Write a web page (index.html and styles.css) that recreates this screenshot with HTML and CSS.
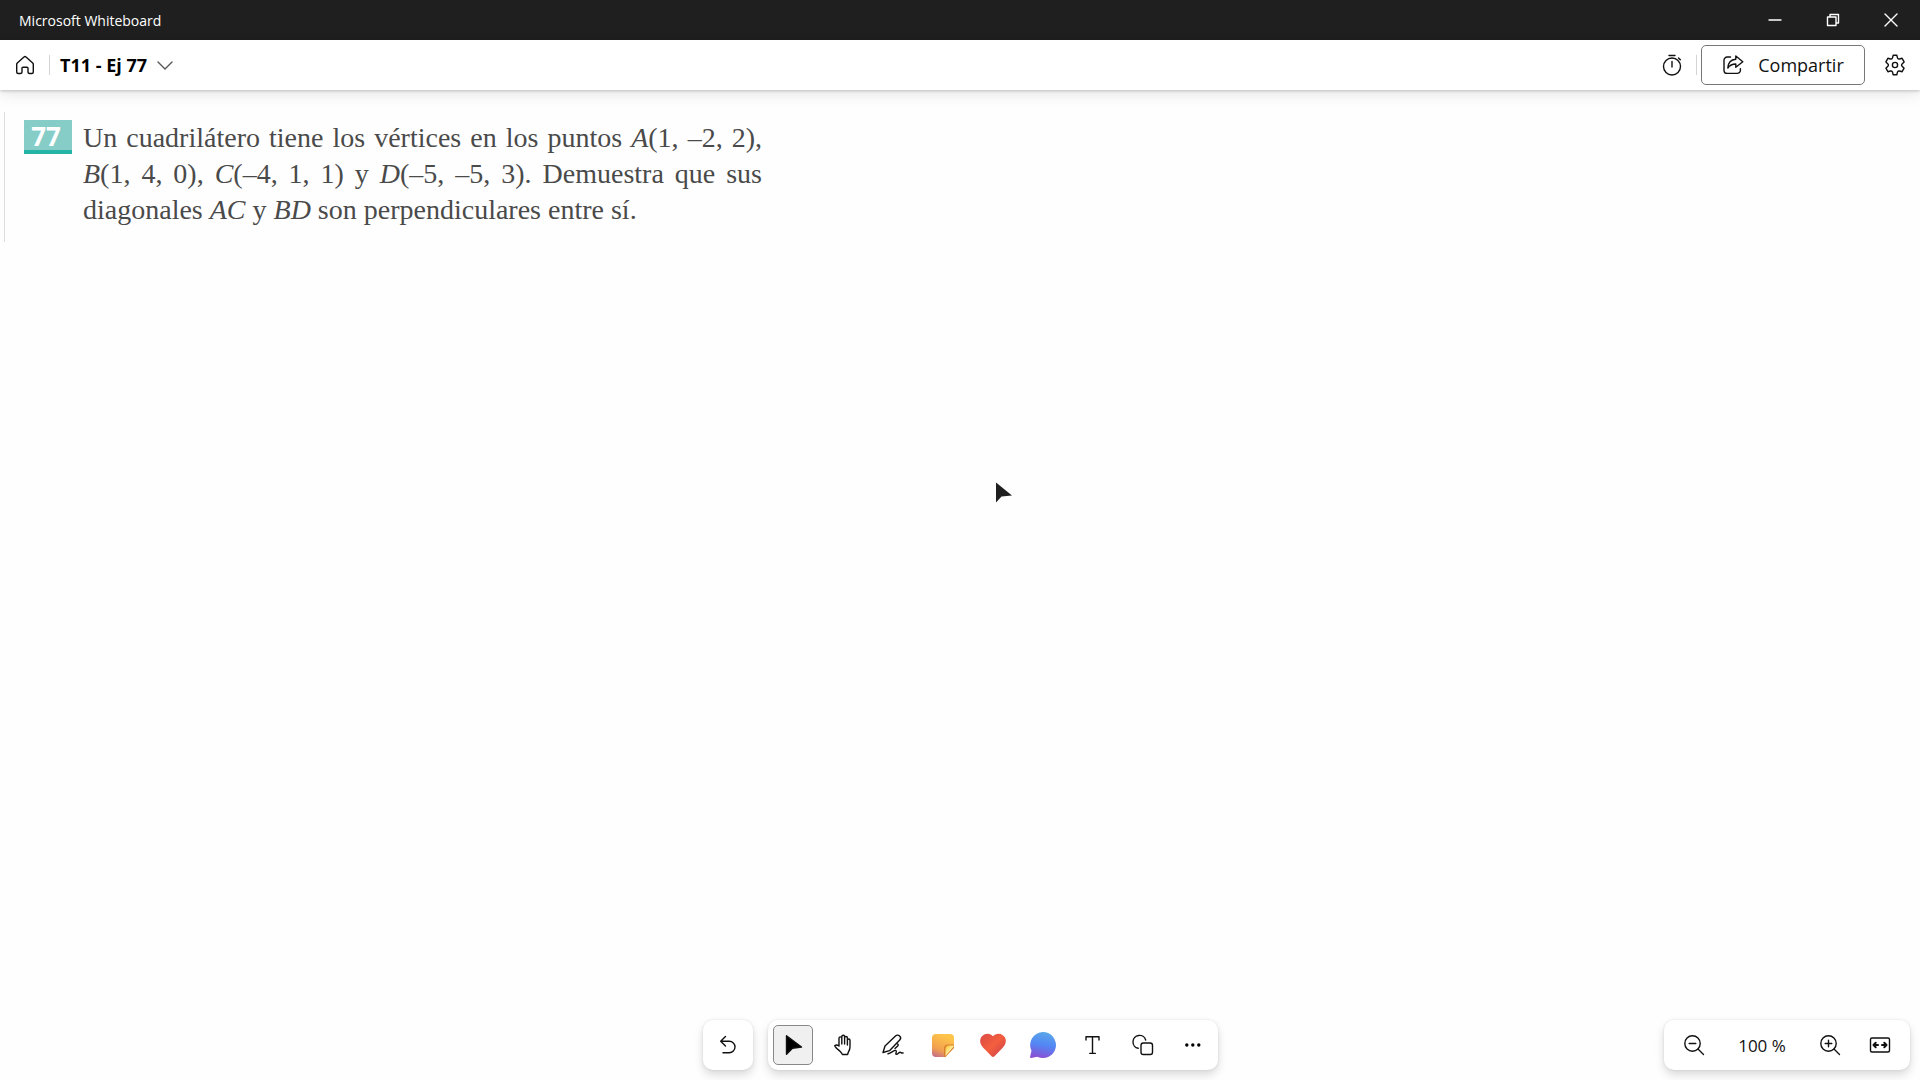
FILE: index.html
```html
<!DOCTYPE html>
<html lang="es">
<head>
    <meta charset="UTF-8">
    <meta name="viewport" content="width=device-width, initial-scale=1.0">
    <title>Microsoft Whiteboard</title>
    <link rel="stylesheet" href="styles.css">
</head>
<body>
    <div class="titlebar">
        <span class="titlebar-name">Microsoft Whiteboard</span>
        <div class="window-buttons">
            <button type="button" aria-label="Minimizar">
                <svg width="14" height="14" viewBox="0 0 14 14"><path d="M1 7h12"/></svg>
            </button>
            <button type="button" aria-label="Restaurar">
                <svg width="14" height="14" viewBox="0 0 14 14"><path d="M1.500 4h8.500v8.500h-8.500zM4 4V1.500h8.500V10H10"/></svg>
            </button>
            <button type="button" aria-label="Cerrar">
                <svg width="14" height="14" viewBox="0 0 14 14"><path d="M1 1l12 12M13 1L1 13"/></svg>
            </button>
        </div>
    </div>

    <header class="header">
        <button type="button" class="icon-button" aria-label="Inicio">
            <svg width="20" height="20" viewBox="0 0 20 20"><path d="M9 1.900a1.500 1.500 0 0 1 2 0l6.700 6c.4.400.6.800.6 1.300V17c0 .900-.6 1.500-1.500 1.500h-2.300c-.9 0-1.500-.6-1.500-1.500v-3.800c0-.6-.4-1-1-1H8c-.6 0-1 .4-1 1V17c0 .900-.6 1.500-1.500 1.500H3.200c-.9 0-1.500-.6-1.500-1.500V9.200c0-.5.200-.9.600-1.300z"/></svg>
        </button>
        <span class="divider"></span>
        <button type="button" class="board-name">
            T11 - Ej 77
            <svg width="16" height="16" viewBox="0 0 16 16"><path d="M1 5l7 7 7-7"/></svg>
        </button>
        <div class="header-actions">
            <button type="button" class="icon-button" aria-label="Temporizador">
                <svg width="20" height="22" viewBox="0 0 20 22"><circle cx="10" cy="12.500" r="8.500"/><path d="M10 7.500v5.500M7 1.500h6M16.500 4l1.800 1.800"/></svg>
            </button>
            <span class="divider"></span>
            <button type="button" class="share">
                <svg width="22" height="22" viewBox="0 0 22 22"><path d="M8.500 3H5.200A3.200 3.200 0 0 0 2 6.200v10A3.200 3.200 0 0 0 5.200 19.400h10a3.200 3.200 0 0 0 3.200-3.200v-1.400"/><path d="M13.800 2l7 5.700-7 5.500V10c-3.500 0-6 1.100-8 4 .3-5 3.200-8.300 8-8.700z"/></svg>
                Compartir
            </button>
            <button type="button" class="icon-button settings" aria-label="Configuración">
                <svg width="22" height="22" viewBox="0 0 22 22"><path d="M9.200 1.200h3.600l.7 2.700c.2.800 1 1.300 1.900 1.100l2.700-.7 2 3.600-2 2c-.7.700-.7 1.600 0 2.300l2 2-2 3.500-2.700-.7c-.9-.2-1.700.3-1.900 1.100l-.7 2.700H9.200l-.7-2.700c-.2-.8-1-1.300-1.900-1.100l-2.700.7-2-3.500 2-2c.7-.7.700-1.600 0-2.300l-2-2 2-3.600 2.700.7c.9.200 1.700-.3 1.900-1.100z"/><circle cx="11" cy="11" r="2.600"/></svg>
            </button>
        </div>
    </header>

    <main class="canvas">
        <article class="exercise">
            <span class="exercise-number">77</span>
            <p class="exercise-text">Un cuadrilátero tiene los vértices en los puntos <i>A</i>(1, –2, 2), <br><i>B</i>(1, 4, 0), <i>C</i>(–4, 1, 1) y <i>D</i>(–5, –5, 3). Demuestra que sus <br><span class="last">diagonales <i>AC</i> y <i>BD</i> son perpendiculares entre sí.</span></p>
        </article>
        <svg class="pointer" width="20" height="24" viewBox="0 0 20 24"><path d="M2 1.500v20l5.500-6L18 14.500z"/></svg>
    </main>

    <footer class="footer">
        <div class="tools">
            <div class="panel">
                <button type="button" class="tool" aria-label="Deshacer">
                    <svg width="24" height="24" viewBox="0 0 24 24"><path d="M9.500 3.500L4.700 8.300l4.800 4.700M5 8.300h8.300a5.700 5.700 0 0 1 0 11.400H7"/></svg>
                </button>
            </div>
            <div class="panel">
                <button type="button" class="tool selected" aria-label="Seleccionar">
                    <svg width="24" height="24" viewBox="0 0 24 24"><path class="solid" d="M5.500 2.800L20.500 14l-9 1.200-6 6z"/></svg>
                </button>
                <button type="button" class="tool" aria-label="Mover lienzo">
                    <svg width="24" height="24" viewBox="0 0 24 24"><path d="M8 13V5.200c0-1.800 2.800-1.800 2.800 0V11V3.600c0-1.800 2.800-1.800 2.800 0V11V4.800c0-1.800 2.800-1.800 2.800 0V12V7.300c0-1.700 2.600-1.700 2.600 0V14c0 2.500-.9 3.800-1.700 5.200L16.600 21.500h-5.200l-1-1.700c-1.500-2.200-3.500-3.100-5.300-5.100-.8-.9-1.300-1.300-1.400-2 1.400-1.200 2.800-.9 4.300.3z"/></svg>
                </button>
                <button type="button" class="tool" aria-label="Entrada de lápiz">
                    <svg width="24" height="24" viewBox="0 0 24 24"><path d="M2 19.500l2-6.500L14.500 3a2.900 2.900 0 0 1 4.200 4L8.500 17.700zM15.800 10l.9.900c.7.700.7 1.300 0 2L14 15.600M7 20.800c3.500-.5 6.300-4.300 7.900-3.300 1.500.9-1.200 3.800.6 3.800 1.500 0 2.200-2.100 3.600-2.100 1.100 0 1 1.200 3 .8"/></svg>
                </button>
                <button type="button" class="tool" aria-label="Nota">
                    <svg width="26" height="26" viewBox="0 0 26 26">
                        <defs>
                            <linearGradient id="note" x1="0" y1="1" x2=".4" y2="0"><stop offset="0" stop-color="#bd6593"/><stop offset=".4" stop-color="#f2a04f"/><stop offset="1" stop-color="#ffc54b"/></linearGradient>
                            <linearGradient id="fold" x1="0" y1="0" x2="1" y2="1"><stop offset=".1" stop-color="#ffc83f"/><stop offset=".5" stop-color="#fff0a0"/></linearGradient>
                        </defs>
                        <path class="fill" fill="url(#note)" d="M6 2h14a4 4 0 0 1 4 4v9l-9 10H6a4 4 0 0 1-4-4V6a4 4 0 0 1 4-4z"/>
                        <path class="fill" fill="#d9802f" d="M24 12.500h-6a4 4 0 0 0-4 4V25h1.500L24 16z"/>
                        <path class="fill" fill="url(#fold)" d="M24.500 13.500h-5.500a3.500 3.500 0 0 0-3.500 3.500v7z"/>
                    </svg>
                </button>
                <button type="button" class="tool" aria-label="Reacciones">
                    <svg width="28" height="28" viewBox="0 0 28 28">
                        <defs><linearGradient id="heart" x1="0" y1="0" x2="1" y2="1"><stop offset="0" stop-color="#d94a45"/><stop offset=".5" stop-color="#f45f3e"/><stop offset="1" stop-color="#c83c4c"/></linearGradient></defs>
                        <path class="fill" fill="url(#heart)" d="M14 5.200C11 1.300 4.500 2 2 6.500c-2 4-.2 8 3.500 11.500l7 7.300c1 1 2 1 3 0l7-7.300c3.700-3.500 5.500-7.500 3.500-11.500C23.500 2 17 1.300 14 5.200z"/>
                    </svg>
                </button>
                <button type="button" class="tool" aria-label="Comentario">
                    <svg width="28" height="28" viewBox="0 0 28 28">
                        <defs><linearGradient id="bubble" x1=".6" y1="0" x2=".4" y2="1"><stop offset="0" stop-color="#5ba8e8"/><stop offset=".5" stop-color="#5386f5"/><stop offset="1" stop-color="#8a50d3"/></linearGradient></defs>
                        <path class="fill" fill="url(#bubble)" d="M14 1a13 13 0 1 1-5.700 24.700L2.200 27c-.9.200-1.300-.5-1.100-1.200l1.400-6A13 13 0 0 1 14 1z"/>
                    </svg>
                </button>
                <button type="button" class="tool" aria-label="Texto">
                    <svg width="24" height="24" viewBox="0 0 24 24"><path d="M5 7V3.800h13V7M11.500 3.800v16.600M8.800 20.400h5.500"/></svg>
                </button>
                <button type="button" class="tool" aria-label="Formas">
                    <svg width="24" height="24" viewBox="0 0 24 24"><path d="M7.200 15.300A6.500 6.500 0 1 1 14.700 7"/><rect x="10" y="10" width="11.500" height="11.500" rx="2.300"/></svg>
                </button>
                <button type="button" class="tool" aria-label="Más opciones">
                    <svg width="24" height="24" viewBox="0 0 24 24"><circle class="dot" cx="5.800" cy="12" r="1.700"/><circle class="dot" cx="11.800" cy="12" r="1.700"/><circle class="dot" cx="17.800" cy="12" r="1.700"/></svg>
                </button>
            </div>
        </div>
        <div class="panel zoom">
            <button type="button" class="tool" aria-label="Alejar">
                <svg width="24" height="24" viewBox="0 0 24 24"><circle cx="10.500" cy="10.500" r="7.700"/><path d="M16 16l5.500 5.500M7.200 10.500h6.600"/></svg>
            </button>
            <button type="button" class="zoom-level">100 %</button>
            <button type="button" class="tool" aria-label="Acercar">
                <svg width="24" height="24" viewBox="0 0 24 24"><circle cx="10.500" cy="10.500" r="7.700"/><path d="M16 16l5.500 5.500M7.200 10.500h6.600M10.500 7.200v6.600"/></svg>
            </button>
            <button type="button" class="tool" aria-label="Ajustar a la pantalla">
                <svg width="24" height="24" viewBox="0 0 24 24"><rect x="2.500" y="5" width="19" height="14" rx="1.500"/><path class="bold" d="M7.700 9.800L5.500 12l2.200 2.200M5.700 12H10M16.300 9.800l2.200 2.200-2.200 2.200M18.300 12H14"/></svg>
            </button>
        </div>
    </footer>
</body>
</html>
```
FILE: styles.css
```css
* {
    box-sizing: border-box;
}
body {
    display: flex;
    flex-direction: column;
    min-height: 100vh;
    margin: 0;
    background-color: #fefefe;
    color: #111;
    font-family: "Open Sans", "Noto Sans", sans-serif;
}
button {
    display: flex;
    align-items: center;
    justify-content: center;
    margin: 0;
    padding: 0;
    border: none;
    background-color: transparent;
    color: inherit;
    font-family: inherit;
    cursor: pointer;
}
svg {
    flex: none;
    fill: none;
    stroke: currentColor;
    stroke-width: 1.4;
    stroke-linecap: round;
    stroke-linejoin: round;
}

/* Title bar */
.titlebar {
    display: flex;
    align-items: center;
    justify-content: space-between;
    height: 40px;
    padding-left: 19px;
    background-color: #1f1f1f;
    color: #fff;
}
.titlebar-name {
    font-size: 14px;
}
.window-buttons {
    display: flex;
    height: 100%;
}
.window-buttons button {
    width: 58px;
}

/* Header */
.header {
    display: flex;
    align-items: center;
    height: 50px;
    padding: 0 5px;
    background-color: #fff;
    box-shadow: 0 1px 3px rgba(0, 0, 0, .2), 0 4px 14px rgba(0, 0, 0, .1);
}
.icon-button {
    width: 40px;
    height: 40px;
}
.divider {
    width: 1px;
    height: 20px;
    margin: 0 4px;
    background-color: #d4d4d4;
}
.board-name {
    gap: 10px;
    padding: 0 6px;
    color: #000;
    font-size: 18px;
    font-weight: 700;
}
.board-name svg {
    color: #555;
}
.header-actions {
    display: flex;
    align-items: center;
    margin-left: auto;
}
.share {
    gap: 14px;
    width: 164px;
    height: 40px;
    border: 1px solid #777;
    border-radius: 5px;
    font-size: 18px;
}
.settings {
    margin-left: 10px;
}

/* Canvas */
.canvas {
    position: relative;
    flex: 1;
    padding: 22px 4px;
}
.exercise {
    display: flex;
    align-items: flex-start;
    gap: 11px;
    width: 758px;
    max-width: 100%;
    height: 130px;
    padding: 8px 0 0 19px;
    border-left: 1px solid #ddd;
}
.exercise-number {
    flex: none;
    width: 48px;
    height: 34px;
    padding-right: 4px;
    border-bottom: 4px solid #24b5a6;
    background-color: #86cdc8;
    color: #fff;
    font-size: 26px;
    font-weight: 700;
    line-height: 32px;
    text-align: center;
}
.exercise-text {
    flex: 1;
    margin: 0;
    color: #4a4a4a;
    font-family: "Liberation Serif", serif;
    font-size: 28px;
    line-height: 36px;
    text-align: justify;
    text-align-last: justify;
}
.last {
    display: block;
    text-align-last: left;
}
.pointer {
    position: absolute;
    top: 42%;
    left: 52%;
    margin-left: -4px;
    fill: #1f1f1f;
    stroke: none;
}

/* Bottom panels */
.footer {
    display: grid;
    grid-template-columns: 1fr auto 1fr;
    align-items: center;
    padding: 0 10px 10px;
}
.tools {
    display: flex;
    grid-column: 2;
    gap: 15px;
}
.panel {
    display: flex;
    gap: 10px;
    padding: 5px;
    border-radius: 10px;
    background-color: #fff;
    box-shadow: 0 0 3px rgba(0, 0, 0, .1), 0 5px 10px rgba(0, 0, 0, .14);
}
.tool {
    width: 40px;
    height: 40px;
    border-radius: 5px;
}
.tool.selected {
    border: 1px solid #888;
    background-color: #f0f0f0;
}
.solid {
    fill: #000;
}
.dot {
    fill: #000;
    stroke: none;
}
.fill {
    stroke: none;
}
.bold {
    stroke-width: 2;
}
.zoom {
    justify-self: end;
    padding: 5px 10px;
}
.zoom-level {
    width: 76px;
    font-size: 17px;
}
```
